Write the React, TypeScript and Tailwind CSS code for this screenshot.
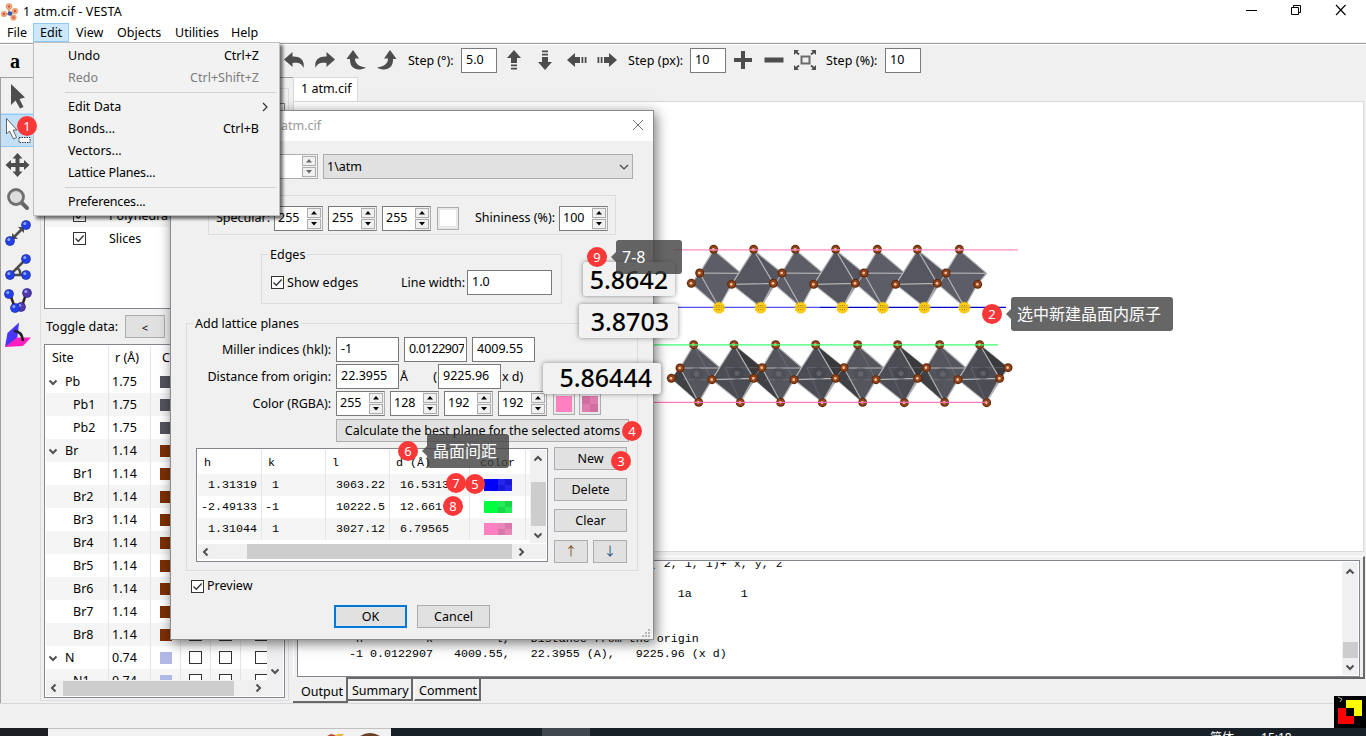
import React from "react";

const INK = "#4d4d4d";

function Check({ on = true, className = "" }: { on?: boolean; className?: string }) {
  return (
    <span className={"block size-[13px] shrink-0 border border-[#333] bg-white " + className}>
      {on && (
        <svg viewBox="0 0 11 11" className="block size-[11px]">
          <path d="M1.5 5.5 4.3 8.3 9.7 2.5" fill="none" stroke="#333" strokeWidth="1.3" />
        </svg>
      )}
    </span>
  );
}

function Chevron({ dir, className = "" }: { dir: "up" | "down" | "left" | "right"; className?: string }) {
  const d = {
    up: "M1.5 6.5 5 3 8.500 6.5",
    down: "M1.5 3.5 5 7 8.500 3.5",
    left: "M6.5 1.5 3 5 6.500 8.5",
    right: "M3.5 1.5 7 5 3.500 8.5",
  }[dir];
  return (
    <svg viewBox="0 0 10 10" className={"block size-[10px] shrink-0 " + className}>
      <path d={d} fill="none" stroke="#505050" strokeWidth="2" />
    </svg>
  );
}

function Spin({ value = "", faded = false, className = "" }: { value?: string; faded?: boolean; className?: string }) {
  return (
    <span
      className={
        "flex h-[25px] w-[49px] shrink-0 border bg-white " +
        (faded ? "border-[#adadad] " : "border-[#7a7a7a] border-r-[#adadad] ") +
        className
      }
    >
      <span className="flex-1 overflow-hidden pl-[3px] leading-[22px]">{value}</span>
      <span className="flex w-[15px] flex-col gap-px bg-[#f0f0f0] py-px">
        {["M4 0 7 3.500H1Z", "M1 0H7L4 3.500Z"].map((d) => (
          <span key={d} className="flex w-[14px] flex-1 items-center justify-center border border-[#adadad] bg-[#f0f0f0]">
            <svg viewBox="0 0 8 4" className="h-[4px] w-[8px]">
              <path d={d} fill={faded ? "#666" : "#000"} />
            </svg>
          </span>
        ))}
      </span>
    </span>
  );
}

function Field({ value, className = "" }: { value: string; className?: string }) {
  return (
    <span className={"block h-[25px] shrink-0 border border-[#7a7a7a] bg-white pr-[2px] pl-[4px] leading-[22px] whitespace-nowrap " + className}>
      <span className="block overflow-hidden">{value}</span>
    </span>
  );
}

function Btn({ children, primary = false, className = "" }: { children: React.ReactNode; primary?: boolean; className?: string }) {
  return (
    <span
      className={
        "flex h-[23px] shrink-0 items-center justify-center bg-[#e1e1e1] whitespace-nowrap " +
        (primary ? "border-2 border-[#0078d7] " : "border border-[#adadad] ") +
        className
      }
    >
      {children}
    </span>
  );
}

function Titlebar() {
  return (
    <div className="flex h-[23px] shrink-0 items-center bg-white">
      <svg viewBox="0 0 18 18" className="ml-[1px] size-[18px]">
        <g fill="none" stroke="#e8a070" strokeWidth="1.6">
          <circle cx="8" cy="3.500" r="2.500" fill="#fbd2b8" />
          <circle cx="3" cy="11" r="2.300" fill="#fbd2b8" />
          <circle cx="14" cy="8" r="2.300" fill="#fbd2b8" />
          <circle cx="12.500" cy="14.500" r="2.300" fill="#fbd2b8" />
          <path d="M8 6v4M5 11l4 0M12 9 9 11M11 13 9 11" strokeWidth="2" />
        </g>
        <circle cx="9" cy="10.500" r="2.300" fill="#3459b5" />
        <g fill="#d94a3a">
          <circle cx="8" cy="3.500" r="1.200" />
          <circle cx="3" cy="11" r="1.200" />
          <circle cx="14" cy="8" r="1.200" />
          <circle cx="12.500" cy="14.500" r="1.200" />
        </g>
      </svg>
      <span className="ml-[4px] flex-1 tracking-[0.15px]">1 atm.cif - VESTA</span>
      <svg viewBox="0 0 12 12" className="mr-[33px] -mt-[3px] size-[12px]">
        <path d="M1 6.500H12" stroke="#000" />
      </svg>
      <svg viewBox="0 0 12 12" className="mr-[33px] -mt-[3px] size-[12px]">
        <path d="M1.500 3.500h7v7h-7zM3.500 3.500v-2h7v7h-2" fill="none" stroke="#000" />
      </svg>
      <svg viewBox="0 0 12 12" className="mr-[19px] -mt-[3px] size-[12px]">
        <path d="M1 1 10.500 11M10.500 1 1 11" stroke="#000" strokeWidth="1.100" />
      </svg>
    </div>
  );
}

function Menubar() {
  return (
    <div className="flex h-[19px] shrink-0 items-center bg-white leading-[18px]">
      <span className="w-[33px] pl-[7px]">File</span>
      <span className="h-[19px] w-[36px] border border-[#90c8f6] bg-[#cce8ff] pl-[6px]">Edit</span>
      <span className="w-[41px] pl-[7px]">View</span>
      <span className="w-[58px] pl-[7px]">Objects</span>
      <span className="w-[56px] pl-[7px]">Utilities</span>
      <span className="pl-[7px]">Help</span>
    </div>
  );
}

function Toolbar() {
  const curl = "M0 7.500 8.500 0V4.500C16 4 21 8 19.500 16 17.500 11 14 10.300 8.500 11V15Z";
  const bend = "M7 0 13 8.500H9C9 13 12 16.500 20 17.500 12 22 3.500 19 4 9H0.500Z";
  const up = "M8 0 15 8H11V13H5V8H1ZM5 14.500H11V16.300H5ZM5 17.700H11V19.500H5Z";
  return (
    <div className="flex h-[32px] shrink-0 items-center bg-[#f0f0f0]">
      <span className="w-[284px] pl-[10px] font-['Liberation_Serif',serif] text-[20px] leading-none font-bold">a</span>
      <svg viewBox="0 0 20 16" className="-mt-[2px] h-[16px] w-[20px]"><path d={curl} fill={INK} /></svg>
      <svg viewBox="0 0 20 16" className="-mt-[2px] ml-[11px] h-[16px] w-[20px] -scale-x-100"><path d={curl} fill={INK} /></svg>
      <svg viewBox="0 0 20 20" className="-mt-[2px] ml-[11px] h-[20px] w-[20px]"><path d={bend} fill={INK} /></svg>
      <svg viewBox="0 0 20 20" className="-mt-[2px] ml-[11px] h-[20px] w-[20px] -scale-x-100"><path d={bend} fill={INK} /></svg>
      <span className="ml-[11px] w-[53px]">Step (°):</span>
      <Field value="5.0" className="-mt-px w-[36px]" />
      <svg viewBox="0 0 16 20" className="-mt-[2px] ml-[9px] h-[20px] w-[16px]"><path d={up} fill={INK} /></svg>
      <svg viewBox="0 0 16 20" className="-mt-[3px] ml-[15px] h-[20px] w-[16px] rotate-180"><path d={up} fill={INK} /></svg>
      <svg viewBox="0 0 16 20" className="-mt-[2px] ml-[16px] h-[20px] w-[16px] -rotate-90"><path d={up} fill={INK} /></svg>
      <svg viewBox="0 0 16 20" className="-mt-[2px] ml-[14px] h-[20px] w-[16px] rotate-90"><path d={up} fill={INK} /></svg>
      <span className="ml-[13px] w-[62px] tracking-[0.1px]">Step (px):</span>
      <Field value="10" className="-mt-px w-[36px]" />
      <svg viewBox="0 0 18 18" className="-mt-[2px] ml-[8px] size-[18px]"><path d="M7 0h4v7h7v4h-7v7H7v-7H0V7h7Z" fill={INK} /></svg>
      <svg viewBox="0 0 20 18" className="-mt-[2px] ml-[12px] h-[18px] w-[20px]"><path d="M0.500 6.500h19v5h-19Z" fill={INK} /></svg>
      <svg viewBox="0 0 22 20" className="-mt-[2px] ml-[10px] h-[20px] w-[22px]">
        <path d="M7.500 6.500h8v7h-8z" fill="none" stroke="#6a6a6a" strokeWidth="2" />
        <path d="M1 1 5 4.500M21 1 17 4.500M1 19 5 15.500M21 19 17 15.500" stroke={INK} strokeWidth="1.800" />
        <path d="M0 0h5L0 5ZM22 0h-5l5 5ZM0 20h5L0 15ZM22 20h-5l5-5Z" fill={INK} />
      </svg>
      <span className="ml-[10px] w-[59px] tracking-[0.1px]">Step (%):</span>
      <Field value="10" className="-mt-px w-[36px]" />
    </div>
  );
}

function Ball({ x, y, c = "#2340e8" }: { x: number; y: number; c?: string }) {
  return (
    <g>
      <circle cx={x} cy={y} r="4.800" fill="#1a2a90" />
      <circle cx={x} cy={y} r="4.300" fill={c} />
      <circle cx={x - 1.2} cy={y - 1.5} r="1.500" fill="#8fa6ff" />
    </g>
  );
}

function Tools() {
  const cls = "block h-[34px] w-[33px] shrink-0";
  return (
    <div className="flex w-[34px] shrink-0 flex-col border-t border-l border-[#a0a0a0] pt-px">
      <svg viewBox="1 79 33 34" className={cls}>
        <path d="M11 84V105L15.500 100.500 20 108.500 23.500 107 19.500 99 25 97.500Z" fill={INK} />
      </svg>
      <svg viewBox="1 113 33 34" className={cls + " bg-[#c3e0f7]"}>
        <path d="M1 114.500H34M1 146.500H34" stroke="#90c8f6" />
        <path d="M6.500 118.500V134L9.500 131 13.500 139 16.500 137.500 13 130H17Z" fill="#fff" stroke="#555" strokeWidth=".9" />
        <path d="M19 137.500H30V142.500H19Z" fill="#fff" stroke="#333" strokeDasharray="1.5 1" />
      </svg>
      <svg viewBox="1 147 33 34" className={cls}>
        <path d="M17.500 153 22.500 158.500H19.500V163H24V160L29.500 165 24 170V167H19.500V171.500H22.500L17.500 177 12.500 171.500H15.500V167H11V170L5.500 165 11 160V163H15.500V158.500H12.500Z" fill={INK} />
      </svg>
      <svg viewBox="1 181 33 34" className={cls}>
        <path d="M21 202 27 208" stroke="#666" strokeWidth="4" strokeLinecap="round" />
        <circle cx="16" cy="197" r="7.500" fill="#ddd" stroke="#707070" strokeWidth="2.800" />
      </svg>
      <svg viewBox="1 215 33 34" className={cls}>
        <path d="M14 237 22 229" stroke={INK} strokeWidth="2.500" />
        <path d="M12 239v-6l6 6ZM24 227v6l-6-6Z" fill={INK} />
        <Ball x={10} y={241} />
        <Ball x={26} y={225} />
      </svg>
      <svg viewBox="1 249 33 34" className={cls}>
        <path d="M26 259 10 275H26M17 268Q21 270 20 275" fill="none" stroke={INK} strokeWidth="2.500" />
        <Ball x={26} y={259} />
        <Ball x={10} y={275} />
        <Ball x={26} y={275} />
      </svg>
      <svg viewBox="1 283 33 34" className={cls}>
        <path d="M10 294 15 308M26 294 22 306" stroke="#3a2020" strokeWidth="2.500" />
        <Ball x={9} y={294} />
        <Ball x={27} y={293} c="#5535a8" />
        <Ball x={21} y={307} c="#5535a8" />
        <Ball x={15} y={308} />
      </svg>
      <svg viewBox="1 317 33 34" className={cls}>
        <path d="M5 347 14 337.500H31L23 346Z" fill="#ff1fc0" />
        <path d="M5 347 7.500 333 19 322.500 17.500 337Z" fill="#4a34f5" />
        <path d="M14 331Q22 331 23 341" fill="none" stroke="#222" strokeWidth="2.600" />
      </svg>
    </div>
  );
}

const sites: [string, string, string, boolean][] = [
  ["Pb", "1.75", "bg-[#52535e]", true],
  ["Pb1", "1.75", "bg-[#52535e]", false],
  ["Pb2", "1.75", "bg-[#52535e]", false],
  ["Br", "1.14", "bg-[#7e2f02]", true],
  ["Br1", "1.14", "bg-[#7e2f02]", false],
  ["Br2", "1.14", "bg-[#7e2f02]", false],
  ["Br3", "1.14", "bg-[#7e2f02]", false],
  ["Br4", "1.14", "bg-[#7e2f02]", false],
  ["Br5", "1.14", "bg-[#7e2f02]", false],
  ["Br6", "1.14", "bg-[#7e2f02]", false],
  ["Br7", "1.14", "bg-[#7e2f02]", false],
  ["Br8", "1.14", "bg-[#7e2f02]", false],
  ["N", "0.74", "bg-[#b0b9e6]", true],
  ["N1", "0.74", "bg-[#b0b9e6]", false],
];

function SidePanel() {
  return (
    <div className="flex w-[259px] shrink-0 flex-col border-t border-[#a0a0a0] pt-[10px] pr-[4px] pl-[6px]">
      <div className="flex h-[613px] flex-col border border-[#dcdcdc] px-[3px]">
        <div className="mt-[14px] flex h-[206px] flex-col border border-[#828790] bg-white pt-[100px]">
          {["Polyhedra", "Slices"].map((n, i) => (
            <div key={n} className={"flex h-[23px] items-center pl-[28px] " + (i === 0 ? "bg-[#f5f5f5]" : "bg-white")}>
              <Check />
              <span className="ml-[23px]">{n}</span>
            </div>
          ))}
        </div>
        <div className="flex h-[35px] items-center">
          <span className="w-[81px] pl-[2px] whitespace-nowrap">Toggle data:</span>
          <Btn className="w-[40px] pt-[2px]"><span className="text-[11px]">&lt;</span></Btn>
        </div>
        <div className="flex h-[354px] flex-col border border-[#828790] bg-white p-px">
          <div className="flex h-[334px]">
            <div className="flex w-[221px] flex-col overflow-hidden">
              <div className="flex h-[24px] shrink-0">
                <span className="w-[63px] border-r border-[#e5e5e5] pl-[6px] leading-[24px]">Site</span>
                <span className="w-[42px] border-r border-[#e5e5e5] pl-[6px] leading-[24px]">r (Å)</span>
                <span className="pl-[11px] leading-[24px]">C</span>
              </div>
              {sites.map(([n, r, c, parent], i) => (
                <div key={n} className={"flex h-[23px] shrink-0 " + (i % 2 ? "bg-[#f5f5f5]" : "bg-white")}>
                  <span className="flex w-[63px] shrink-0 items-center border-r border-[#e5e5e5]">
                    {parent ? (
                      <>
                        <Chevron dir="down" className="ml-[2px]" />
                        <span className="ml-[7px]">{n}</span>
                      </>
                    ) : (
                      <span className="ml-[27px]">{n}</span>
                    )}
                  </span>
                  <span className="w-[42px] shrink-0 border-r border-[#e5e5e5] pl-[3px] leading-[23px]">{r}</span>
                  <span className="flex w-[30px] shrink-0 items-center border-r border-[#e5e5e5] pl-[9px]">
                    <span className={"size-[12px] " + c} />
                  </span>
                  <span className="flex w-[30px] shrink-0 items-center border-r border-[#e5e5e5] pl-[8px]"><Check on={false} /></span>
                  <span className="flex w-[30px] shrink-0 items-center border-r border-[#e5e5e5] pl-[8px]"><Check on={false} /></span>
                  <span className="flex shrink-0 items-center pl-[14px]"><Check on={false} /></span>
                </div>
              ))}
            </div>
            <div className="flex w-[16px] flex-col justify-end bg-[#f0f0f0] pb-[4px] pl-[3px]">
              <Chevron dir="down" />
            </div>
          </div>
          <div className="flex h-[16px] items-center bg-[#f0f0f0] pl-[3px]">
            <Chevron dir="left" />
            <span className="ml-[4px] h-[15px] w-[171px] bg-[#cdcdcd]" />
            <Chevron dir="right" className="ml-[19px]" />
          </div>
        </div>
      </div>
    </div>
  );
}

const bromines = (pts: [number, number][]) =>
  pts.map(([x, y]) => (
    <g key={x + "-" + y}>
      <circle cx={x} cy={y} r="13.500" fill="#5f2a0c" />
      <circle cx={x} cy={y} r="10" fill="#94451a" />
      <circle cx={x - 1} cy={y} r="4" fill="#f0c8ac" />
    </g>
  ));

function Crystal() {
  const upperA = [0, 246, 492, 737];
  const upperB = [0, 246, 492];
  const lower = [0, 246, 492, 738];
  const edge = { stroke: "#b4b4b6", strokeWidth: 3.5, strokeLinejoin: "round" as const };
  return (
    <svg viewBox="0 0 1110 570" className="mt-[128px] ml-[366px] block h-[190px] w-[370px] overflow-visible">
      <g {...edge}>
        {upperA.map((o) => (
          <g key={o} transform={`translate(${o} 0)`}>
            <path d={o > 700 ? "M161 60 243 130 215 163 177 232 94 160 119 129Z" : "M161 60 240 127 215 163 177 232 94 160 119 129Z"} fill="#5c5d66" />
            <path d="M119 129 240 130M119 129 177 232" fill="none" />
          </g>
        ))}
        {upperB.map((o) => (
          <g key={o} transform={`translate(${o} 0)`}>
            <path d="M281 60 366 129 302 232 215 163Z" fill="#55565f" />
            <path d="M281 60 340 160 302 232M340 160 215 163" fill="none" />
          </g>
        ))}
        {lower.map((o) => (
          <g key={o} transform={`translate(${o} 0)`}>
            <path d="M101 345 181 414 156 449 116 517 34 445 60 414Z" fill="#54555d" />
            <path d="M34 445 60 414 116 517Z" fill="#3f4044" stroke="none" />
            <path d="M60 414H181M60 414 116 517" fill="none" />
            <path d="M101 345 156 449H70" fill="none" stroke="#85868a" strokeWidth="1.500" />
            <path d="M222 345 306 413 241 517 156 449Z" fill="#4b4c54" />
            <path d="M222 345 306 413 281 445Z" fill="#3a3a3d" stroke="none" />
            <path d="M222 345 281 445 241 517M281 445 156 449" fill="none" />
            <path d="M195 413H306M195 413 241 517" fill="none" stroke="#7b7c82" strokeWidth="1.500" />
            <circle cx="110" cy="432" r="20" fill="#4a4b53" opacity=".5" stroke="none" />
            <circle cx="110" cy="432" r="8" fill="#777" opacity=".5" stroke="none" />
            <circle cx="231" cy="430" r="20" fill="#42434a" opacity=".5" stroke="none" />
            <circle cx="231" cy="430" r="8" fill="#777" opacity=".5" stroke="none" />
          </g>
        ))}
      </g>
      {bromines([[161, 58], [281, 58], [406, 58], [527, 58], [652, 58], [772, 58], [898, 58]])}
      {bromines([[119, 129], [94, 160], [215, 163], [340, 160], [366, 129], [461, 163], [586, 160], [612, 129], [707, 163], [832, 160], [858, 129], [953, 163]])}
      {bromines([[101, 344], [222, 344], [347, 344], [467, 344], [593, 344], [713, 344], [839, 344], [959, 344]])}
      {bromines([[34, 445], [60, 414], [156, 449], [281, 445], [306, 413], [402, 449], [527, 445], [552, 413], [648, 449], [773, 445], [799, 413], [894, 449], [1019, 445], [1044, 413]])}
      {bromines([[116, 517], [241, 518], [362, 517], [487, 518], [608, 517], [733, 518], [854, 517], [980, 518]])}
      <path d="M40 59.500H1074" stroke="#ff8cc8" strokeWidth="4" />
      <path d="M54 232H480" stroke="#5050f0" strokeWidth="3.500" />
      <path d="M480 232H1038" stroke="#0000d0" strokeWidth="3.500" />
      {[177, 302, 422, 547, 668, 793, 913].map((x) => (
        <g key={x}>
          <circle cx={x} cy="233" r="16" fill="#ffce12" stroke="#f4c200" strokeWidth="4" strokeDasharray="5 3" />
          <path d={`M${x - 8} 227h16M${x - 8} 239h16`} stroke="#8a6a00" strokeWidth="3" strokeDasharray="3 4" />
          <path d={`M${x - 18} 232h36`} stroke="#b09a38" strokeWidth="2" />
        </g>
      ))}
      <path d="M-30 344.500H1014" stroke="#3cff70" strokeWidth="4" />
      <path d="M-30 517H980" stroke="#ff78bc" strokeWidth="4" />
    </svg>
  );
}

const log = [
  " ".repeat(50) + "( 2, 1, 1)+ x, y, z",
  "",
  " ".repeat(54) + "1a       1",
  "",
  "",
  "        h         k         l,   Distance from the origin",
  "       -1 0.0122907   4009.55,   22.3955 (A),   9225.96 (x d)",
].join("\n");

function MainPane() {
  return (
    <div className="flex flex-1 flex-col">
      <div className="flex h-[24px] shrink-0">
        <div className="h-[25px] w-[65px] border border-b-0 border-[#d9d9d9] bg-white pl-[7px] leading-[22px] whitespace-nowrap">1 atm.cif</div>
      </div>
      <div className="mr-[2px] h-[451px] shrink-0 border border-[#d9d9d9] bg-white">
        <Crystal />
      </div>
      <div className="mt-[4px] mr-px flex h-[123px] shrink-0 flex-col border-t border-r-2 border-b-2 border-l border-t-white border-r-[#696969] border-b-[#696969] border-l-white pt-[3px] pr-[3px] pl-[3px]">
        <div className="flex h-[117px] border border-[#828790] bg-white p-px">
          <pre className="h-[113px] flex-1 overflow-hidden pl-[1px] font-['Liberation_Mono',monospace] text-[11.667px] leading-[15px]">
            <span className="-mt-[5px] block">{log}</span>
          </pre>
          <div className="flex w-[16px] flex-col items-center bg-[#f0f0f0] py-[3px]">
            <Chevron dir="up" className="mt-[2px]" />
            <span className="mt-[65px] h-[17px] w-[15px] bg-[#cdcdcd]" />
            <Chevron dir="down" className="mt-[4px]" />
          </div>
        </div>
      </div>
      <div className="flex h-[24px] items-start">
        <span className="-mt-[2px] h-[26px] w-[55px] border-r-2 border-b-2 border-[#696969] bg-[#f0f0f0] pl-[8px] leading-[29px]">Output</span>
        <span className="h-[22px] w-[65px] border-r-2 border-b-2 border-[#696969] pl-[4px] leading-[23px]">Summary</span>
        <span className="ml-px h-[22px] w-[67px] border-r-2 border-b-2 border-l border-[#696969] border-l-white pl-[4px] leading-[23px]">Comment</span>
      </div>
    </div>
  );
}

function Alpha({ base, dim, className = "" }: { base: string; dim: string; className?: string }) {
  return (
    <span className={"grid grid-cols-2 grid-rows-2 " + className}>
      <span className={base} />
      <span className={dim} />
      <span className={dim} />
      <span className={base} />
    </span>
  );
}

const planes = [
  { h: " 1.31319", k: " 1", l: "3063.22", d: "16.5313", c: "bg-[#0000ff]", a: "bg-[#2424ec]", b: "bg-[#1818d6]" },
  { h: "-2.49133", k: "-1", l: "10222.5", d: "12.661", c: "bg-[#00ff40]", a: "bg-[#24ec58]", b: "bg-[#18d648]" },
  { h: " 1.31044", k: " 1", l: "3027.12", d: "6.79565", c: "bg-[#ff80c0]", a: "bg-[#e888ba]", b: "bg-[#d877aa]" },
];

function PlaneTable() {
  const col = "shrink-0 border-r border-[#e5e5e5] whitespace-pre ";
  return (
    <div className="flex h-[114px] w-[352px] shrink-0 flex-col border border-[#828790] bg-white p-px font-['Liberation_Mono',monospace] text-[11.667px]">
      <div className="flex h-[94px]">
        <div className="w-[332px]">
          <div className="flex h-[24px] leading-[26px]">
            <span className={col + "w-[64px] pl-[6px]"}>h</span>
            <span className={col + "w-[64px] pl-[6px]"}>k</span>
            <span className={col + "w-[64px] pl-[6px]"}>l</span>
            <span className={col + "w-[80px] pl-[6px]"}>d (Å)</span>
            <span className={col + "w-[56px] pl-[10px]"}>color</span>
          </div>
          {planes.map((p, i) => (
            <div key={p.h} className={"flex h-[22px] leading-[23px] " + (i % 2 ? "bg-white" : "bg-[#f5f5f5]")}>
              <span className={col + "w-[64px] pl-[3px]"}>{p.h}</span>
              <span className={col + "w-[64px] pl-[3px]"}>{p.k}</span>
              <span className={col + "w-[64px] pl-[10px]"}>{p.l}</span>
              <span className={col + "w-[80px] pl-[10px]"}>{p.d}</span>
              <span className={col + "flex w-[56px] items-center pl-[14px]"}>
                <span className={"h-[12px] w-[14px] " + p.c} />
                <Alpha base={p.a} dim={p.b} className="h-[12px] w-[14px]" />
              </span>
            </div>
          ))}
        </div>
        <div className="flex h-[93px] w-[16px] flex-col items-center bg-[#f0f0f0] pt-[4px]">
          <Chevron dir="up" />
          <span className="mt-[18px] h-[44px] w-[15px] bg-[#cdcdcd]" />
          <Chevron dir="down" className="mt-[4px]" />
        </div>
      </div>
      <div className="flex h-[15px] items-center bg-[#f0f0f0] pl-[3px]">
        <Chevron dir="left" />
        <span className="ml-[36px] h-[15px] w-[265px] bg-[#cdcdcd]" />
        <Chevron dir="right" className="ml-[4px]" />
      </div>
    </div>
  );
}

function Swatch({ children, className = "" }: { children: React.ReactNode; className?: string }) {
  return <span className={"flex h-[23px] w-[22px] shrink-0 items-center justify-center border border-[#adadad] bg-[#e8e8e8] " + className}>{children}</span>;
}

function Legend({ children }: { children: React.ReactNode }) {
  return <legend className="ml-[6px] h-[16px] px-[2px] leading-[18px] whitespace-nowrap">{children}</legend>;
}

function Dialog() {
  return (
    <div className="absolute top-[110px] left-[170px] flex h-[530px] w-[484px] flex-col border border-[#8c8c8c] bg-[#f0f0f0] shadow-[2px_3px_12px_rgba(0,0,0,0.55)]">
      <div className="flex h-[30px] shrink-0 items-center bg-white pr-[9px] pl-[110px] text-[#999]">
        <span className="flex-1">atm.cif</span>
        <svg viewBox="0 0 12 12" className="-mt-[2px] size-[12px]"><path d="M1 1 11 11M11 1 1 11" stroke="#777" /></svg>
      </div>
      <div className="mt-[13px] flex pl-[98px]">
        <Spin faded />
        <div className="ml-[5px] flex h-[25px] w-[310px] items-center border border-[#adadad] bg-[#e1e1e1] pr-[3px] pl-[3px]">
          <span className="flex-1">1\atm</span>
          <svg viewBox="0 0 10 10" className="size-[10px]"><path d="M1 3 5 7 9 3" fill="none" stroke="#444" strokeWidth="1.200" /></svg>
        </div>
      </div>
      <div className="mt-[16px] ml-[37px] flex h-[40px] w-[408px] items-center border border-[#dcdcdc] pt-[6px] pl-[7px]">
        <span className="w-[58px] whitespace-nowrap">Specular:</span>
        <Spin value="255" />
        <Spin value="255" className="ml-[5px]" />
        <Spin value="255" className="ml-[5px]" />
        <Swatch className="ml-[6px]"><span className="size-[16px] bg-white" /></Swatch>
        <span className="ml-[16px] w-[84px] whitespace-nowrap">Shininess (%):</span>
        <Spin value="100" />
      </div>
      <fieldset className="mt-[11px] ml-[90px] h-[58px] w-[301px] border border-[#dcdcdc]">
        <Legend>Edges</Legend>
        <div className="flex items-center pt-[8px] pl-[9px]">
          <Check />
          <span className="ml-[3px] w-[114px] whitespace-nowrap tracking-[0.1px]">Show edges</span>
          <span className="w-[66px] whitespace-nowrap">Line width:</span>
          <Field value="1.0" className="w-[85px]" />
        </div>
      </fieldset>
      <fieldset className="mt-[11px] ml-[15px] h-[256px] w-[452px] shrink-0 border border-[#dcdcdc]">
        <Legend>Add lattice planes</Legend>
        <div className="flex flex-col gap-[2px] pt-[6px] pl-[9px]">
          <div className="flex items-center">
            <span className="w-[140px] pr-[5px] text-right whitespace-nowrap">Miller indices (hkl):</span>
            <Field value="-1" className="w-[63px]" />
            <Field value="0.0122907" className="ml-[5px] w-[63px] tracking-[-0.55px]" />
            <Field value="4009.55" className="ml-[5px] w-[63px]" />
          </div>
          <div className="flex items-center">
            <span className="w-[140px] pr-[5px] text-right whitespace-nowrap">Distance from origin:</span>
            <Field value="22.3955" className="w-[63px]" />
            <span className="flex w-[39px] justify-between px-px"><span>Å</span><span>(</span></span>
            <Field value="9225.96" className="w-[63px]" />
            <span className="pl-px whitespace-nowrap">x d)</span>
          </div>
          <div className="flex items-center">
            <span className="w-[140px] pr-[5px] text-right whitespace-nowrap">Color (RGBA):</span>
            <Spin value="255" />
            <Spin value="128" className="ml-[5px]" />
            <Spin value="192" className="ml-[5px]" />
            <Spin value="192" className="ml-[5px]" />
            <Swatch className="ml-[6px]"><span className="size-[16px] bg-[#ff80c0]" /></Swatch>
            <Swatch className="ml-[4px]"><Alpha base="bg-[#d06fa2]" dim="bg-[#e07db0]" className="size-[16px]" /></Swatch>
          </div>
        </div>
        <Btn className="mt-[3px] ml-[149px] w-[293px]">Calculate the best plane for the selected atoms</Btn>
        <div className="mt-[6px] flex items-start pl-[9px]">
          <PlaneTable />
          <div className="-mt-px ml-[6px] flex w-[73px] flex-col gap-[8px]">
            <Btn>New</Btn>
            <Btn>Delete</Btn>
            <Btn>Clear</Btn>
            <div className="flex gap-[5px]">
              <Btn className="w-[34px] text-[#7a4a18]">↑</Btn>
              <Btn className="w-[34px] text-[#1a4a7a]">↓</Btn>
            </div>
          </div>
        </div>
      </fieldset>
      <div className="mt-[6px] flex items-center pl-[20px]">
        <Check />
        <span className="ml-[3px]">Preview</span>
      </div>
      <div className="mt-[10px] flex gap-[10px] pl-[163px]">
        <Btn primary className="w-[73px]">OK</Btn>
        <Btn className="w-[73px]">Cancel</Btn>
      </div>
      <svg viewBox="0 0 9 9" className="mt-auto mr-[2px] mb-[1px] size-[9px] self-end">
        <path d="M6 0h2v2H6ZM3 3h2v2H3ZM6 3h2v2H6ZM0 6h2v2H0ZM3 6h2v2H3ZM6 6h2v2H6Z" fill="#b8b8b8" />
      </svg>
    </div>
  );
}

function EditMenu() {
  const row = "flex h-[22px] items-center justify-between pr-[18px] pl-[32px]";
  const sep = "mr-[1px] ml-[29px] h-px bg-[#d2d2d2]";
  return (
    <div className="absolute top-[42px] left-[33px] flex h-[174px] w-[247px] flex-col border border-[#bfbfbf] bg-[#f2f2f2] p-[2px] shadow-[3px_3px_3px_rgba(0,0,0,0.55)]">
      <div className={row}><span>Undo</span><span>Ctrl+Z</span></div>
      <div className={row + " text-[#7d7d7d]"}><span>Redo</span><span>Ctrl+Shift+Z</span></div>
      <div className={sep + " mt-[3px] mb-[3px]"} />
      <div className="flex h-[22px] items-center justify-between pr-[7px] pl-[32px]">
        <span>Edit Data</span>
        <svg viewBox="0 0 10 10" className="size-[10px]"><path d="M3 1 7 5 3 9" fill="none" stroke="#333" strokeWidth="1.200" /></svg>
      </div>
      <div className={row}><span>Bonds...</span><span>Ctrl+B</span></div>
      <div className={row}>Vectors...</div>
      <div className={row + " tracking-[-0.2px]"}>Lattice Planes...</div>
      <div className={sep + " mt-[3px] mb-[3px]"} />
      <div className={row + " tracking-[-0.15px]"}>Preferences...</div>
    </div>
  );
}

function Badge({ n, className }: { n: number; className: string }) {
  return (
    <span className={"absolute flex size-[20px] items-center justify-center rounded-full bg-[#fb3838] font-['Noto_Sans',sans-serif] text-[13px] leading-none text-white " + className}>
      {n}
    </span>
  );
}

function Note({ children, className }: { children: React.ReactNode; className: string }) {
  return (
    <div className={"absolute h-[34px] rounded-[3px] bg-[rgba(64,64,64,0.8)] pl-[6px] font-['Noto_Sans','Noto_Sans_CJK_SC',sans-serif] text-[16px] leading-[34px] whitespace-nowrap text-white " + className}>
      <svg viewBox="0 0 5 10" className="absolute top-[12px] -left-[5px] h-[10px] w-[5px]"><path d="M5 0V10L0 5Z" fill="rgba(64,64,64,0.8)" /></svg>
      {children}
    </div>
  );
}

function Measure({ children, className }: { children: React.ReactNode; className: string }) {
  return (
    <div className={"absolute flex items-center justify-end rounded-[3px] bg-[#f2f2f2] text-[25px] leading-none font-medium text-black shadow-[0_0_5px_rgba(0,0,0,0.45)] " + className}>
      {children}
    </div>
  );
}

export default function App() {
  return (
    <div className="relative flex h-[736px] w-[1366px] flex-col overflow-hidden bg-[#f0f0f0] font-['Noto_Sans','Noto_Sans_CJK_SC',sans-serif] text-[12.5px] leading-[18px] text-black">
      <Titlebar />
      <Menubar />
      <div className="h-[3px] shrink-0 border-b border-white bg-[#f0f0f0]">
        <div className="mt-px h-px bg-[#a0a0a0]" />
      </div>
      <Toolbar />
      <div className="flex h-[626px] shrink-0">
        <Tools />
        <SidePanel />
        <MainPane />
      </div>
      <div className="h-[25px] shrink-0 border-t border-[#d7d7d7]" />
      <div className="flex h-[8px] shrink-0 bg-[#182027]">
        <span className="w-[48px] bg-[#1c1e22]" />
        <svg viewBox="0 0 343 7" className="h-[8px] w-[343px] border-t border-[#c0c0c0] bg-[#f2f2f2]">
          <path d="M279 7l4-2 4 1 1 1Z" fill="#c0442e" />
          <path d="M287 7l3-2 6 0-2 2Z" fill="#e8b23c" />
          <path d="M312 7q10-6 20 0Z" fill="#6b4026" />
        </svg>
        <span className="ml-[151px] w-[48px] bg-[#40474e]" />
        <div className="ml-[620px] h-[8px] w-[140px] overflow-hidden text-[12px] leading-[20px] whitespace-nowrap text-white">
          <span>简体</span>
          <span className="ml-[27px]">15:18</span>
        </div>
      </div>
      <Dialog />
      <EditMenu />
      <Measure className="top-[262px] left-[583px] h-[34px] w-[92px] pr-[7px]">5.8642</Measure>
      <Measure className="top-[304px] left-[579px] h-[34px] w-[99px] pt-px pr-[9px]">3.8703</Measure>
      <Measure className="top-[363px] left-[543px] h-[31px] w-[118px] pr-[9px] pb-[3px]">5.86444</Measure>
      <Note className="top-[240px] left-[616px] w-[66px]">7-8</Note>
      <Note className="top-[434px] left-[427px] w-[82px]">晶面间距</Note>
      <Note className="top-[297px] left-[1011px] w-[162px]">选中新建晶面内原子</Note>
      <Badge n={1} className="top-[116px] left-[17px]" />
      <Badge n={2} className="top-[304px] left-[982px]" />
      <Badge n={3} className="top-[451px] left-[611px]" />
      <Badge n={4} className="top-[421px] left-[622px]" />
      <Badge n={5} className="top-[474px] left-[465px]" />
      <Badge n={6} className="top-[441px] left-[398px]" />
      <Badge n={7} className="top-[473px] left-[446px]" />
      <Badge n={8} className="top-[496px] left-[443px]" />
      <Badge n={9} className="top-[247px] left-[587px]" />
      <svg viewBox="0 0 32 32" className="absolute top-[696px] left-[1334px] size-[32px]">
        <path d="M0 0H32V32H0Z" fill="#000" />
        <path d="M12 4H28V20H20V12H12Z" fill="#ff0" />
        <path d="M4 12H12V20H20V28H4Z" fill="#f00" />
        <path d="M4 1 8 3 6 6" fill="none" stroke="#aaa" />
      </svg>
    </div>
  );
}
